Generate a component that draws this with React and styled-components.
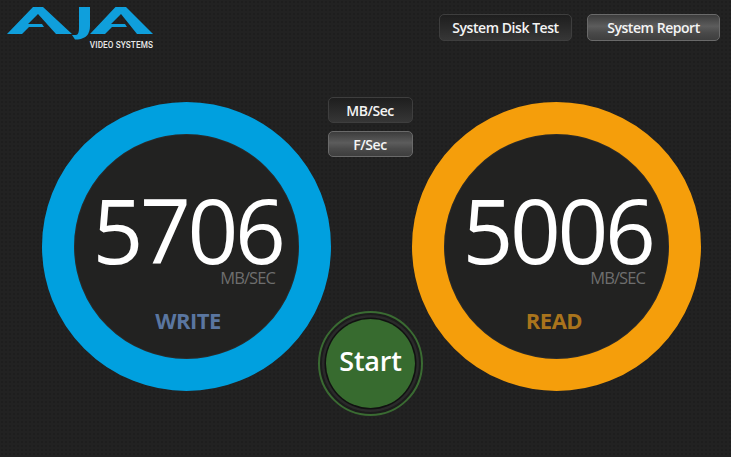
import React from "react";
import styled, { createGlobalStyle } from "styled-components";

const Global = createGlobalStyle`
  html, body { margin: 0; padding: 0; background: #212121; }
  body { width: 731px; height: 457px; overflow: hidden; font-family: "Open Sans", "Noto Sans", sans-serif; }
`;
const Page = styled.div`
  width: 731px; height: 457px; display: flex; flex-direction: column;
  position: relative; overflow: hidden;
  background-color: #222222;
  background-image: radial-gradient(circle, #1e1e1e 0.7px, transparent 0.9px);
  background-size: 4px 4px;
`;
const Header = styled.header`
  height: 102px; display: flex; justify-content: space-between; align-items: flex-start;
  padding: 0 11px 0 7px; box-sizing: border-box;
`;
const Logo = styled.div`
  display: flex; flex-direction: column; align-items: flex-end; width: 146px; margin-top: 7px;
`;
const LogoTag = styled.span`
  font-family: "Roboto", sans-serif; font-size: 8.2px; font-weight: 500; color: #e8e8e8; line-height: 10px;
  margin-top: 0; letter-spacing: .1px;
`;
const TopActions = styled.div`
  display: flex; gap: 15px; margin-top: 14px;
`;
const Btn = styled.button`
  width: ${p => p.$w}px; height: ${p => p.$h}px; padding: 0; border-radius: 5px;
  border: 1px solid ${p => p.$on ? "#6a6a6a" : "#3e3e3e"};
  background: ${p => p.$on
    ? "linear-gradient(#3c3c3c 0%, #5c5c5c 45%, #4a4a4a 70%, #3e3e3e 100%)"
    : "linear-gradient(#1e1e1e 0%, #2a2a2a 50%, #363636 100%)"};
  color: #f4f4f4; font-family: inherit; font-size: 14px; font-weight: 600; letter-spacing: -.45px;
  display: flex; align-items: center; justify-content: center; box-sizing: border-box;
`;
const Main = styled.main`
  display: flex; padding-left: 42px; align-items: flex-start;
`;
const Ring = styled.section`
  width: 289px; height: 289px; border-radius: 50%; box-sizing: border-box;
  border: 32px solid ${p => p.$color}; background: #222221;
  box-shadow: inset 0 0 0 1px #2b2b2b;
  display: flex; flex-direction: column; align-items: center; flex: none;
`;
const Value = styled.div`
  font-size: 89px; line-height: 90px; color: #fff; margin-top: 51px; padding-left: 2px;
  letter-spacing: -3.4px; font-weight: 500;
`;
const Unit = styled.div`
  align-self: flex-end; margin-right: 24px; font-size: 16.5px; line-height: 18px; color: #6e6e6e; margin-top: -6px;
  letter-spacing: -.9px;
`;
const Label = styled.div`
  font-size: 22px; font-weight: 700; line-height: 24px; margin-top: 21px; margin-left: ${p => p.$nudge}px;
  color: ${p => p.$color}; letter-spacing: -.5px;
`;
const Center = styled.div`
  width: 81px; flex: none; display: flex; flex-direction: column; align-items: center; position: relative;
  height: 289px; margin-top: -5px;
`;
const Units = styled.div`
  display: flex; flex-direction: column; gap: 8px; margin: 0 0 0 -3px;
`;
const StartOuter = styled.div`
  position: absolute; left: -13px; top: 214px;
  width: 105px; height: 105px; border-radius: 50%; border: 2px solid #3a6b32; box-sizing: border-box;
  display: flex; align-items: center; justify-content: center; background: #1c1c1c;
`;
const StartBtn = styled.button`
  width: 89px; height: 89px; border-radius: 50%; border: 0; background: #376b2f; padding: 0 0 6px;
  box-shadow: 0 0 0 1.5px #111, 0 0 0 4px #2a2a2a;
  color: #fff; font-family: inherit; font-size: 27px; font-weight: 600; letter-spacing: -.2px;
`;

const AjaLogo = () => (
  <svg width="146" height="33" viewBox="7 7 146 33" aria-hidden="true">
    <path fill="#0f9fdc" d="M7 34 L33 7 H43 L72 34 H56 L38 14 L28 24 H42 L44 27 H29 L22 34 Z" />
    <path fill="#0f9fdc" d="M79 7 H90 V26 Q90 38 78 39.5 L75 39.5 L72 35 H76 Q79 35 79 28 Z" />
    <path fill="#0f9fdc" d="M90 34 L115.5 7 H126 L153 34 H137 L121 14 L111 24 H125 L127 27 H112 L105 34 Z" />
  </svg>
);

const Gauge = ({ value, color, label, labelColor, nudge }) => (
  <Ring $color={color}>
    <Value>{value}</Value>
    <Unit>MB/SEC</Unit>
    <Label $color={labelColor} $nudge={nudge}>{label}</Label>
  </Ring>
);

export default function App() {
  return (
    <Page>
      <Global />
      <Header>
        <Logo>
          <AjaLogo />
          <LogoTag>VIDEO SYSTEMS</LogoTag>
        </Logo>
        <TopActions>
          <Btn $w={133} $h={27}>System Disk Test</Btn>
          <Btn $w={133} $h={27} $on>System Report</Btn>
        </TopActions>
      </Header>
      <Main>
        <Gauge value="5706" color="#00a0df" label="WRITE" labelColor="#5a76a0" nudge={3} />
        <Center>
          <Units>
            <Btn $w={85} $h={26}>MB/Sec</Btn>
            <Btn $w={85} $h={26} $on>F/Sec</Btn>
          </Units>
          <StartOuter><StartBtn>Start</StartBtn></StartOuter>
        </Center>
        <Gauge value="5006" color="#f59e0b" label="READ" labelColor="#a9741c" nudge={-5} />
      </Main>
    </Page>
  );
}
